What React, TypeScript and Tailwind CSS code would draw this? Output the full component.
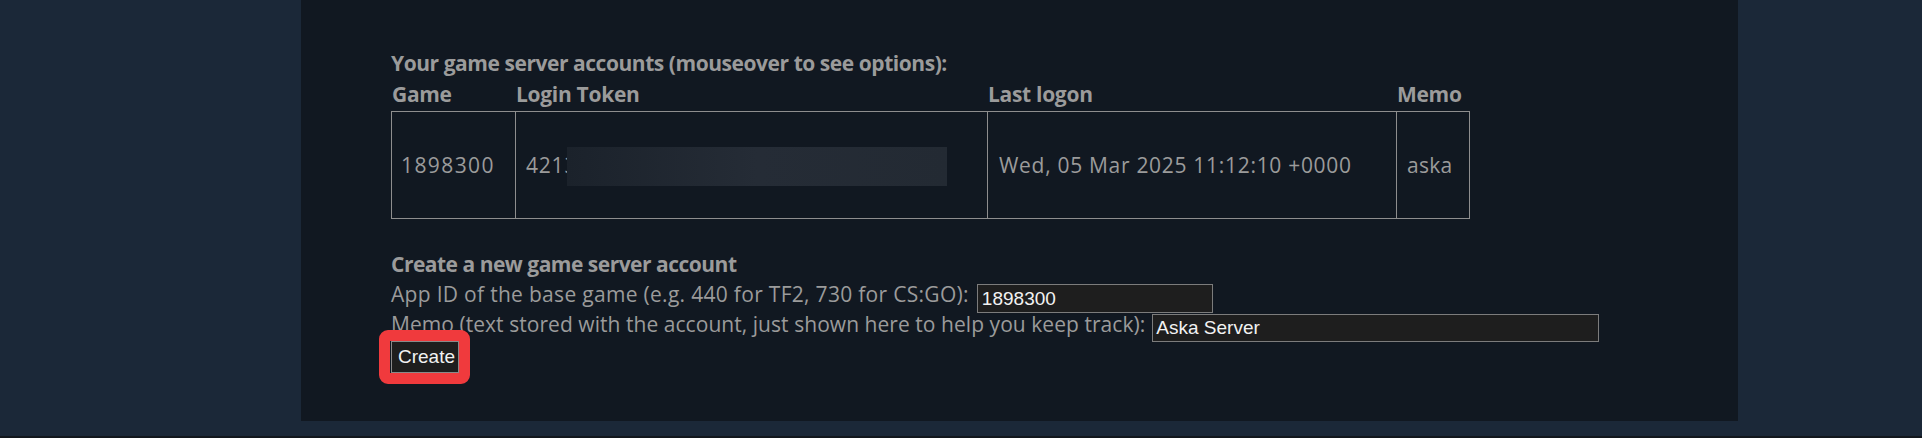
import React from "react";

const headers = [
  { label: "Game", w: "w-[124px]" },
  { label: "Login Token", w: "w-[472px]" },
  { label: "Last logon", w: "w-[409px]" },
  { label: "Memo", w: "w-[74px]" },
];

export default function App() {
  return (
    <div className="flex h-[438px] w-[1922px] flex-col bg-[#1b2838] font-['Open_Sans',sans-serif] text-[21px] leading-[30px] text-[#9b9b9b]">
      <div className="h-[436px]">
        <div className="ml-[301px] h-[421px] w-[1437px] bg-[#111821] pl-[90px] pt-[48px]">
          <div className="font-bold tracking-[-0.45px]">
            Your game server accounts (mouseover to see options):
          </div>

          <div className="flex h-[33px] pt-[1px] font-bold tracking-[-0.3px]">
            {headers.map((h) => (
              <div key={h.label} className={`${h.w} pl-[1px]`}>
                {h.label}
              </div>
            ))}
          </div>

          <div className="flex h-[108px] w-[1079px] border border-[#8e8e8e]">
            <div className="flex w-[123px] items-center pl-[9px] tracking-[1.4px]">1898300</div>
            <div className="relative flex w-[472px] items-center border-l border-[#8e8e8e] pl-[10px] tracking-[0.8px]">
              4213
              <div className="absolute left-[51px] top-[35px] h-[39px] w-[380px] bg-gradient-to-r from-[#1b222b] via-[#252c36] to-[#232a33]" />
            </div>
            <div className="flex w-[409px] items-center border-l border-[#8e8e8e] pl-[11px] tracking-[0.7px]">
              Wed, 05 Mar 2025 11:12:10 +0000
            </div>
            <div className="flex w-[73px] items-center border-l border-[#8e8e8e] pl-[10px] tracking-[0.3px]">
              aska
            </div>
          </div>

          <div className="mt-[30px] font-bold tracking-[-0.5px]">
            Create a new game server account
          </div>
          <div className="flex h-[30px] tracking-[0.3px]">
            <span>App ID of the base game (e.g. 440 for TF2, 730 for CS:GO):</span>
            <div className="ml-[8px] mt-[5px] flex h-[29px] w-[236px] items-center border border-[#7c7c7c] bg-[#1e1e1e] pl-[4px] font-['Liberation_Sans',sans-serif] text-[19px] tracking-normal text-[#f2f2f2]">
              1898300
            </div>
          </div>
          <div className="flex h-[30px] tracking-[0.05px]">
            <span>Memo (text stored with the account, just shown here to help you keep track):</span>
            <div className="ml-[7px] mt-[5px] flex h-[28px] w-[447px] items-center border border-[#7c7c7c] bg-[#1e1e1e] pl-[3px] font-['Liberation_Sans',sans-serif] text-[19px] tracking-normal text-[#f2f2f2]">
              Aska Server
            </div>
          </div>

          <div className="relative mt-[2px] w-[68px]">
            <button className="flex h-[32px] w-[68px] items-center border border-[#8a8a8a] bg-[#1e1e1e] pl-[6px] font-['Liberation_Sans',sans-serif] text-[19px] text-[#f2f2f2]">
              Create
            </button>
            <div className="absolute left-[-12px] top-[-11px] h-[54px] w-[91px] rounded-[9px] border-[11px] border-[#f03a3d]" />
          </div>
        </div>
      </div>
      <div className="h-[2px] bg-[#12171d]" />
    </div>
  );
}
